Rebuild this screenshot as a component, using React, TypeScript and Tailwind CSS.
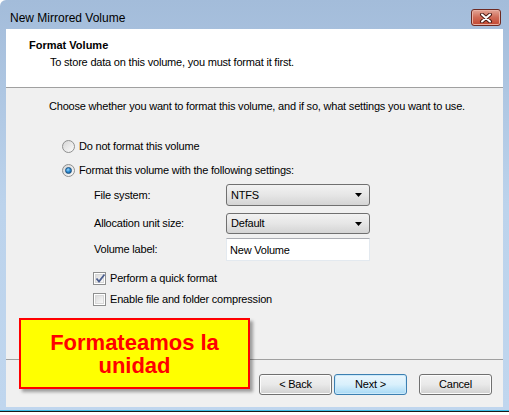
import React from 'react'

const ui = { fontFamily: '"Liberation Sans", Arial, sans-serif' }

function Radio({ checked }: { checked?: boolean }) {
  return (
    <span className="relative inline-flex h-[13px] w-[13px] items-center justify-center rounded-full border border-[#8e8f8f] bg-gradient-to-br from-[#d6d6d6] to-[#fbfbfb]">
      {checked && (
        <span className="h-[7px] w-[7px] rounded-full border border-[#1b4f7e] bg-[radial-gradient(circle_at_40%_35%,#9fd7ff_0%,#2d8fd5_45%,#0d4d8a_100%)]" />
      )}
    </span>
  )
}

function Check({ checked }: { checked?: boolean }) {
  return (
    <span className="inline-flex h-[13px] w-[13px] items-center justify-center border border-[#8e8f8f] bg-white p-[1px]">
      <span className="relative h-full w-full border border-[#d8d8d8] bg-gradient-to-br from-[#dcdcdc] to-[#f8f8f8]">
        {checked && (
          <svg className="absolute -left-[1px] -top-[2px]" width="11" height="11" viewBox="0 0 11 11">
            <path d="M1.5 5.5 L4 8.5 L9.5 1.5" fill="none" stroke="#4c5f8f" strokeWidth="1.8" />
          </svg>
        )}
      </span>
    </span>
  )
}

function Select({ value, h }: { value: string; h: string }) {
  return (
    <div className={`flex w-[144px] ${h} items-center justify-between rounded-[3px] border border-[#707070] bg-gradient-to-b from-[#f2f2f2] via-[#e6e6e6] to-[#d4d4d4] pl-[4px] pr-[7px]`}>
      <span>{value}</span>
      <svg width="7" height="4" viewBox="0 0 7 4"><path d="M0 0 H7 L3.5 4 Z" fill="#000" /></svg>
    </div>
  )
}

function Btn({ label, focus }: { label: string; focus?: boolean }) {
  return (
    <div
      className={
        'flex h-[21px] w-[73px] items-center justify-center rounded-[3px] border ' +
        (focus
          ? 'border-[#3c7fb1] bg-gradient-to-b from-[#eaf6fd] via-[#d9f0fc] to-[#a7d9f5] shadow-[inset_0_0_0_1px_#cbe9fa]'
          : 'border-[#707070] bg-gradient-to-b from-[#f2f2f2] via-[#e9e9e9] to-[#d0d0d0] shadow-[inset_0_0_0_1px_#fcfcfc]')
      }
    >
      {label}
    </div>
  )
}

export default function App() {
  return (
    <div className="relative flex h-[415px] w-[509px] flex-col overflow-hidden bg-white text-[11px] tracking-[-0.2px] text-black" style={ui}>
      <div className="flex h-[410px] flex-col rounded-tl-[6px] bg-gradient-to-b from-[#a3bcda] via-[#bcd3ec] to-[#c0d6ee]">
        {/* title bar */}
        <div className="flex h-[29px] items-start justify-between pl-[10px] pr-[8px]">
          <span className="mt-[9px] text-[12px] tracking-normal">New Mirrored Volume</span>
          <div className="mt-[9px] flex h-[17px] w-[30px] items-center justify-center rounded-[3px] border border-[#6e2a22] bg-gradient-to-b from-[#e3a596] via-[#cf6a56] to-[#c2452f] shadow-[inset_0_0_0_1px_#eab0a3]">
            <svg width="14" height="10" viewBox="0 0 14 10">
              <path d="M3 1.5 L11 8.5 M11 1.5 L3 8.5" stroke="#4a1a14" strokeWidth="4" strokeLinecap="round" />
              <path d="M3 1.5 L11 8.5 M11 1.5 L3 8.5" stroke="#fff" strokeWidth="2" strokeLinecap="round" />
            </svg>
          </div>
        </div>

        {/* client area */}
        <div className="mx-[6px] flex h-[378px] flex-col bg-[#f0f0f0]">
          <div className="h-[59px] border-b border-[#a0a0a0] bg-white pl-[23px] pt-[9px]">
            <div className="text-[11px] font-bold leading-[14px] tracking-normal">Format Volume</div>
            <div className="mt-[3px] pl-[21px] leading-[14px]">To store data on this volume, you must format it first.</div>
          </div>

          <div className="h-[271px] pl-[43px] pt-[11px]">
            <div className="leading-[14px]">Choose whether you want to format this volume, and if so, what settings you want to use.</div>

            <div className="mt-[26px] ml-[13px] flex items-center gap-[4px] leading-[14px]">
              <Radio />
              <span>Do not format this volume</span>
            </div>
            <div className="mt-[10px] ml-[13px] flex items-center gap-[4px] leading-[14px]">
              <Radio checked />
              <span>Format this volume with the following settings:</span>
            </div>

            <div className="ml-[45px] mt-[7px] grid grid-cols-[132px_144px] items-center">
              <span>File system:</span>
              <Select value="NTFS" h="h-[22px]" />
              <span className="mt-[7px]">Allocation unit size:</span>
              <div className="mt-[7px]"><Select value="Default" h="h-[21px]" /></div>
              <span className="mt-[4px]">Volume label:</span>
              <div className="mt-[4px] flex h-[23px] w-[144px] items-start border border-[#e3e9ef] border-t-[#abadb3] bg-white pl-[3px] pt-[3px]">New Volume</div>
            </div>

            <div className="ml-[44px] mt-[11px] flex items-center gap-[4px] leading-[13px]">
              <Check checked />
              <span>Perform a quick format</span>
            </div>
            <div className="ml-[44px] mt-[8px] flex items-center gap-[4px] leading-[13px]">
              <Check />
              <span>Enable file and folder compression</span>
            </div>
          </div>

          <div className="flex flex-1 items-start border-t border-[#a0a0a0] pt-[14px] pl-[253px]">
            <Btn label="< Back" />
            <div className="ml-[2px]"><Btn label="Next >" focus /></div>
            <div className="ml-[12px]"><Btn label="Cancel" /></div>
          </div>
        </div>
      </div>
      <div className="h-[1px] bg-[#3cc0e8]" />
      <div className="h-[1px] bg-[#1a1a1a]" />

      {/* annotation */}
      <div className="absolute left-[19px] top-[318px] flex h-[71px] w-[231px] flex-col items-center justify-center border-2 border-[#ff0000] bg-[#ffff00] text-[22px] font-bold leading-[23px] tracking-normal text-[#ff0000] shadow-[3px_3px_3px_rgba(0,0,0,0.35)]">
        <span>Formateamos la</span>
        <span>unidad</span>
      </div>
    </div>
  )
}
